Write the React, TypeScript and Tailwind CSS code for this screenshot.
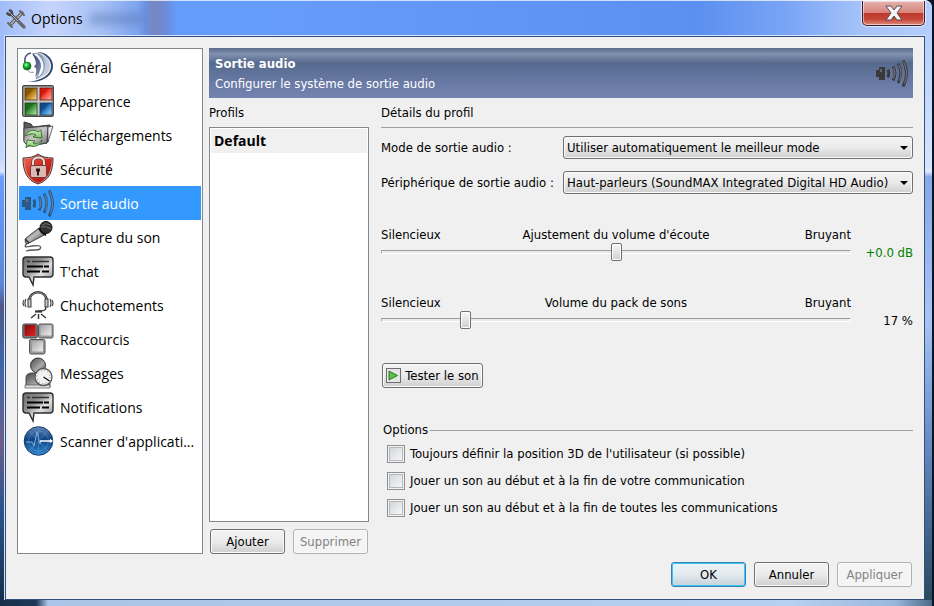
import { useState } from 'react';
import type { ButtonHTMLAttributes, ReactNode } from 'react';
import clsx from 'clsx';

function GeneralIcon() {
  return (
    <svg viewBox="0 0 32 32" className="size-8">
      <defs>
        <linearGradient id="gen-a" x1="0" y1="0" x2="1" y2="1">
          <stop offset="0" stopColor="#2c3c62" />
          <stop offset="1" stopColor="#8593b2" />
        </linearGradient>
        <linearGradient id="gen-c" x1="0" y1="0" x2="1" y2="1">
          <stop offset="0" stopColor="#7484a6" />
          <stop offset="1" stopColor="#dfe6f2" />
        </linearGradient>
        <radialGradient id="gen-b" cx="0.4" cy="0.35">
          <stop offset="0" stopColor="#a4ffb0" />
          <stop offset="0.5" stopColor="#25c93c" />
          <stop offset="1" stopColor="#067a18" />
        </radialGradient>
      </defs>
      <path d="M15 1c9 0 16 6 16 14 0 10-11 17-26 16C19 30 29 24 29 15 29 8 23 3 15 1Z" fill="#34466e" />
      <path d="M14 2c9 1 14 6 14 13s-6 11-14 13Z" fill="#c3cde0" />
      <path d="M16 2c6 3 9 7 9 13 0 5-3 9-9 12Z" fill="url(#gen-c)" />
      <path d="M14 2c5 3 8 8 8 14 0 5-3 9-8 12 3-5 4-9 3-14-1-4-3-8-6-11Z" fill="#f3f6fb" stroke="#596a8f" strokeWidth="0.7" />
      <path d="M10 2c6 4 9 8 9 13 0 4-3 8-6 11 1-4 2-7 1-9l-2-1 2-3c0-4-2-7-4-11Z" fill="url(#gen-a)" />
      <path d="M9 2C4 3 2 7 3 12" fill="none" stroke="#43527a" strokeWidth="1.600" />
      <path d="M5 18c1 3 4 4 7 3" fill="none" stroke="#8390ad" />
      <circle cx="5" cy="15" r="4" fill="url(#gen-b)" stroke="#0d6b1c" strokeWidth="0.6" />
    </svg>
  );
}

function AppearanceIcon() {
  return (
    <svg viewBox="0 0 32 32" className="size-8">
      <defs>
        <linearGradient id="app-o" x1="0" y1="0" x2="1" y2="1">
          <stop offset="0.35" stopColor="#8a5600" />
          <stop offset="0.5" stopColor="#b87c18" />
          <stop offset="1" stopColor="#ffe0a0" />
        </linearGradient>
        <linearGradient id="app-r" x1="0" y1="0" x2="1" y2="1">
          <stop offset="0.35" stopColor="#d81810" />
          <stop offset="0.5" stopColor="#f04a3c" />
          <stop offset="1" stopColor="#ffb8a8" />
        </linearGradient>
        <linearGradient id="app-g" x1="0" y1="0" x2="1" y2="1">
          <stop offset="0.35" stopColor="#1c6a1c" />
          <stop offset="0.5" stopColor="#3f973c" />
          <stop offset="1" stopColor="#c8f0b8" />
        </linearGradient>
        <linearGradient id="app-b" x1="0" y1="0" x2="1" y2="1">
          <stop offset="0.35" stopColor="#0d4a86" />
          <stop offset="0.5" stopColor="#2b7cc4" />
          <stop offset="1" stopColor="#a8d8ff" />
        </linearGradient>
      </defs>
      <rect x="0.7" y="0.7" width="30.6" height="30.6" rx="1.5" fill="#c4c4c4" stroke="#484848" strokeWidth="1.4" />
      <rect x="3" y="3" width="12" height="12" fill="url(#app-o)" stroke="#4c3a18" strokeWidth="0.8" />
      <rect x="18" y="3" width="12" height="12" fill="url(#app-r)" stroke="#6a1c18" strokeWidth="0.8" />
      <rect x="3" y="18" width="12" height="12" fill="url(#app-g)" stroke="#1c401c" strokeWidth="0.8" />
      <rect x="18" y="18" width="12" height="12" fill="url(#app-b)" stroke="#183858" strokeWidth="0.8" />
    </svg>
  );
}

function DownloadsIcon() {
  return (
    <svg viewBox="0 0 32 32" className="size-8">
      <defs>
        <linearGradient id="dl-f" x1="0" y1="0" x2="1" y2="1">
          <stop offset="0" stopColor="#777" />
          <stop offset="0.5" stopColor="#c9c9c9" />
          <stop offset="1" stopColor="#666" />
        </linearGradient>
        <linearGradient id="dl-g" x1="0" y1="0" x2="0" y2="1">
          <stop offset="0" stopColor="#d2efc0" />
          <stop offset="1" stopColor="#7cc05e" />
        </linearGradient>
      </defs>
      <path d="M2 3l7 2 2 3 17-2v4l-3 14L6 27 2 22Z" fill="#5b5b5b" stroke="#333" />
      <path d="M2 9l22-2 2 1-1 16L6 27l-4-4Z" fill="url(#dl-f)" stroke="#444" />
      <path d="M26 8l5-1-5 16Z" fill="#eee" stroke="#444" strokeWidth="0.8" />
      <path d="M3 17c2-6 10-7 13-4l3-2 1 8-9-1 3-2c-3-2-7-1-11 1Z" fill="url(#dl-g)" stroke="#2f6a26" strokeWidth="0.9" />
      <path d="M20 21c-1 6-10 8-13 5l-3 3 1-8 8 1-2 2c3 2 6 0 9-3Z" fill="url(#dl-g)" stroke="#2f6a26" strokeWidth="0.9" />
    </svg>
  );
}

function SecurityIcon() {
  return (
    <svg viewBox="0 0 32 32" className="size-8">
      <defs>
        <linearGradient id="sec" x1="0" y1="0" x2="1" y2="1">
          <stop offset="0" stopColor="#f06a58" />
          <stop offset="0.5" stopColor="#d42a1e" />
          <stop offset="1" stopColor="#a0150c" />
        </linearGradient>
      </defs>
      <path d="M16 1c4 3 9 4 15 4 0 12-3 22-15 26C4 27 1 17 1 5c6 0 11-1 15-4Z" fill="#c9a39f" stroke="#5a2a28" />
      <path d="M16 2c4 3 8 4 14 4-1 11-3 20-14 24C5 26 3 17 2 6c6 0 10-1 14-4Z" fill="url(#sec)" />
      <path d="M11 14V9c0-6 11-6 11 0v5" fill="none" stroke="#7c3833" strokeWidth="3.6" />
      <path d="M11 14V9c0-6 11-6 11 0v5" fill="none" stroke="#e8dddb" strokeWidth="2" />
      <rect x="8.500" y="12.500" width="16" height="12" rx="1.500" fill="#dcb9b4" stroke="#7c3833" />
      <path d="M14 15.500h4v3h-1v4h-2v-4h-1Z" fill="#2c1a19" />
    </svg>
  );
}

function SpeakerIcon({ className }: { className: string }) {
  return (
    <svg viewBox="0 0 32 32" className={className} fill="none" stroke="currentColor">
      <path d="M0 13h4v7H0Z" fill="currentColor" stroke="none" />
      <path d="M3 10h6v13H3Z" fill="currentColor" stroke="none" />
      <path d="M4 12h2v3H4Z" fill="#8b98a4" fillOpacity="0.5" stroke="none" />
      <path d="M12 12.500q1.500 3.500 0 8" strokeWidth="2.800" />
      <path d="M17 9.500q4 6.500 0 14" strokeWidth="2.800" />
      <path d="M22 6.500q5.500 9.500 0 19.500" strokeWidth="2.800" />
      <path d="M27 3.500q7 12.500 0 26" strokeWidth="2.800" />
      <path d="M17.500 10.500q3 5 0 11M22.500 7.500q4.500 8 1 16M27.500 4.500q5.500 11 1 22" stroke="#8b98a4" strokeWidth="0.7" />
    </svg>
  );
}

function MicrophoneIcon() {
  return (
    <svg viewBox="0 0 32 32" className="size-8">
      <defs>
        <linearGradient id="mic" x1="0" y1="0" x2="1" y2="1">
          <stop offset="0" stopColor="#444" />
          <stop offset="0.45" stopColor="#bdbdbd" />
          <stop offset="1" stopColor="#111" />
        </linearGradient>
      </defs>
      <path d="M5 22C1 27 4 26 10 25c7-1 10 0 8 3-2 2-9 0-14 2" fill="none" stroke="#555" strokeWidth="1.300" />
      <path d="M17 7l7 6L9 21l-4 2-2-2 1-4Z" fill="url(#mic)" stroke="#222" strokeWidth="0.8" />
      <circle cx="24" cy="6.500" r="6" fill="#333" stroke="#111" />
      <path d="M20 4q4-3 8 0M19 6q5-2 10 2" fill="none" stroke="#777" strokeWidth="0.9" />
      <path d="M17 7q2 5 7 7" fill="none" stroke="#111" strokeWidth="2" />
      <path d="M3 18l4 4" stroke="#222" strokeWidth="1.500" />
    </svg>
  );
}

function ChatIcon() {
  return (
    <svg viewBox="0 0 32 32" className="size-8">
      <defs>
        <linearGradient id="chat" x1="0" y1="0" x2="1" y2="1">
          <stop offset="0" stopColor="#6a6a6a" />
          <stop offset="0.35" stopColor="#8f8f8f" />
          <stop offset="0.6" stopColor="#e2e2e2" />
          <stop offset="1" stopColor="#777" />
        </linearGradient>
      </defs>
      <path d="M4 2h24q3 0 3 3v14q0 3-3 3H12l-1 8-4-8H4q-3 0-3-3V5q0-3 3-3Z" fill="url(#chat)" stroke="#2e2e2e" strokeWidth="1.400" />
      <path d="M5 6.500h3m2 0h17" stroke="#333" strokeWidth="1.300" />
      <path d="M5 11.500h16m1 0h5M5 16.500h13m2 0h7" stroke="#000" strokeWidth="2" />
    </svg>
  );
}

function WhisperIcon() {
  return (
    <svg viewBox="0 0 32 32" className="size-8" fill="none" stroke="#383838">
      <path d="M7 13C7 0 25 0 25 13" strokeWidth="2.400" />
      <path d="M7 13C7 0.500 25 0.500 25 13" stroke="#aaa" strokeWidth="0.7" />
      <rect x="6" y="10" width="3" height="8" fill="#ccc" />
      <rect x="23" y="10" width="3" height="8" fill="#ccc" />
      <path d="M4 10q-2 4 0 8M2 11q-2 3 0 6M28 10q2 4 0 8M30 11q2 3 0 6" strokeWidth="1.100" />
      <path d="M24 18c0 4-3 4-8 4" strokeWidth="1.300" />
      <path d="M13 22.500h7" strokeWidth="2.200" />
      <path d="M14 25l-5 4M16.500 25v5M19 25l5 4" strokeWidth="1.500" />
    </svg>
  );
}

function HotkeysIcon() {
  return (
    <svg viewBox="0 0 32 32" className="size-8">
      <defs>
        <linearGradient id="key" x1="0" y1="0" x2="1" y2="1">
          <stop offset="0" stopColor="#a4a4a4" />
          <stop offset="1" stopColor="#f0f0f0" />
        </linearGradient>
        <linearGradient id="key-r" x1="0" y1="0" x2="1" y2="1">
          <stop offset="0" stopColor="#7e0c0c" />
          <stop offset="1" stopColor="#e82020" />
        </linearGradient>
      </defs>
      <rect x="0.800" y="1" width="14.500" height="14" rx="1.500" fill="#777" stroke="#444" />
      <rect x="2.500" y="2" width="11" height="11" rx="1" fill="url(#key-r)" />
      <rect x="16.500" y="1" width="14.500" height="14" rx="1.500" fill="#999" stroke="#555" />
      <rect x="18.500" y="2" width="11" height="10.500" rx="1" fill="url(#key)" />
      <rect x="7.500" y="16.500" width="15.500" height="14.500" rx="1.500" fill="#999" stroke="#555" />
      <rect x="10" y="18" width="11" height="10.500" rx="1" fill="url(#key)" />
    </svg>
  );
}

function MessagesIcon() {
  return (
    <svg viewBox="0 0 32 32" className="size-8">
      <defs>
        <linearGradient id="msg" x1="0" y1="0" x2="1" y2="1">
          <stop offset="0" stopColor="#444" />
          <stop offset="0.6" stopColor="#aaa" />
          <stop offset="1" stopColor="#444" />
        </linearGradient>
      </defs>
      <path d="M4 30v-9q0-5 6-5h12q6 0 6 14Z" fill="url(#msg)" stroke="#444" />
      <path d="M3 28h25v3H3Z" fill="#ddd" stroke="#555" strokeWidth="0.700" />
      <circle cx="16" cy="8.500" r="7.500" fill="url(#msg)" stroke="#333" />
      <circle cx="21.500" cy="20" r="8.500" fill="#f2f2f2" stroke="#555" strokeWidth="1.300" />
      <circle cx="21.500" cy="20" r="6.500" fill="none" stroke="#888" strokeDasharray="1 2.400" />
      <path d="M21.500 20l6 4" stroke="#111" strokeWidth="1.300" />
    </svg>
  );
}

function ScannerIcon() {
  return (
    <svg viewBox="0 0 32 32" className="size-8">
      <defs>
        <linearGradient id="scan" x1="0" y1="0" x2="0" y2="1">
          <stop offset="0" stopColor="#5f86b8" />
          <stop offset="0.45" stopColor="#0f4284" />
          <stop offset="1" stopColor="#2f8ad0" />
        </linearGradient>
      </defs>
      <circle cx="16.500" cy="16" r="14.300" fill="url(#scan)" stroke="#1c3c66" />
      <path d="M16.500 2v28M7 6l19 20M26 6L7 26" stroke="#6fa4d8" strokeWidth="0.400" />
      <circle cx="16.500" cy="16" r="10" fill="none" stroke="#6fa4d8" strokeWidth="0.400" />
      <path d="M4 17h6l2 4 3-14 3 12 1-3" fill="none" stroke="#8cb6e2" strokeWidth="0.900" />
      <path d="M18 16h12m-2-1.500l2 1.500-2 1.500" fill="none" stroke="#fff" strokeWidth="1.300" />
    </svg>
  );
}

function ToolsIcon() {
  return (
    <svg viewBox="0 0 20 20" className="size-5" fill="none" strokeLinecap="round">
      <path d="M16 4L5 15" stroke="#555" strokeWidth="3.400" />
      <path d="M16 4L5 15" stroke="#b5b5b5" strokeWidth="1.600" />
      <path d="M1.500 4.500q3 3 4.500 0Q6 2 4 1.500M5 5l12 12" stroke="#4c4c4c" strokeWidth="2.600" />
      <path d="M5 5l12 12" stroke="#c5c5c5" />
      <path d="M14 2l4 4M2 14l4 4" stroke="#666" strokeWidth="2" />
      <path d="M13 13l5 5" stroke="#6b6b6b" strokeWidth="3.200" />
    </svg>
  );
}

const SECTIONS: { label: string; icon: ReactNode }[] = [
  { label: 'Général', icon: <GeneralIcon /> },
  { label: 'Apparence', icon: <AppearanceIcon /> },
  { label: 'Téléchargements', icon: <DownloadsIcon /> },
  { label: 'Sécurité', icon: <SecurityIcon /> },
  { label: 'Sortie audio', icon: <SpeakerIcon className="size-8 text-[#2b5885]" /> },
  { label: 'Capture du son', icon: <MicrophoneIcon /> },
  { label: "T'chat", icon: <ChatIcon /> },
  { label: 'Chuchotements', icon: <WhisperIcon /> },
  { label: 'Raccourcis', icon: <HotkeysIcon /> },
  { label: 'Messages', icon: <MessagesIcon /> },
  { label: 'Notifications', icon: <ChatIcon /> },
  { label: "Scanner d'applicati...", icon: <ScannerIcon /> },
];

const CHECKS = [
  "Toujours définir la position 3D de l'utilisateur (si possible)",
  'Jouer un son au début et à la fin de votre communication',
  'Jouer un son au début et à la fin de toutes les communications',
];

type ButtonProps = ButtonHTMLAttributes<HTMLButtonElement> & { primary?: boolean };

function Button({ className, primary, ...props }: ButtonProps) {
  return (
    <button
      type="button"
      className={clsx(
        'flex h-[25px] shrink-0 items-center justify-center rounded-[3px] border bg-linear-to-b from-0% via-50%',
        primary
          ? 'border-[#3c7fb1] from-[#eef3f6] via-[#e2eaee] to-[#c4d2da] shadow-[inset_0_0_0_1px_#38c8f4]'
          : 'border-[#707070] from-[#f3f3f3] via-[#ebebeb] to-[#cfcfcf] shadow-[inset_0_0_0_1px_#fafafa]',
        'disabled:border-[#adb2b5] disabled:bg-[#f4f4f4] disabled:bg-none disabled:text-[#838383]',
        className
      )}
      {...props}
    />
  );
}

function SelectRow({ id, label, value }: { id: string; label: string; value: string }) {
  return (
    <div className="flex h-[23px] items-center">
      <label htmlFor={id} className="w-[182px] shrink-0 whitespace-nowrap">
        {label}
      </label>
      <div className="relative h-full min-w-0 flex-1">
        <select
          id={id}
          className="size-full appearance-none rounded-[3px] border border-[#707070] bg-linear-to-b from-[#f3f3f3] from-0% via-[#ebebeb] via-50% to-[#cfcfcf] pr-5 pl-[3px] shadow-[inset_0_0_0_1px_#fafafa]"
        >
          <option>{value}</option>
        </select>
        <svg viewBox="0 0 8 4" className="pointer-events-none absolute top-[10px] right-[5px] h-1 w-2">
          <path d="M0 0h8L4 4Z" fill="#000" />
        </svg>
      </div>
    </div>
  );
}

type VolumeProps = {
  id: string;
  title: string;
  start: number;
  valueClass?: string;
  format: (value: number) => string;
};

function Volume({ id, title, start, valueClass, format }: VolumeProps) {
  const [value, setValue] = useState(start);

  return (
    <div className="grid grid-cols-[1fr_62px]">
      <div className="grid h-[17px] grid-cols-[1fr_auto_1fr] items-end">
        <span>Silencieux</span>
        <label htmlFor={id}>{title}</label>
        <span className="text-right">Bruyant</span>
      </div>
      <input
        id={id}
        type="range"
        min={0}
        max={100}
        value={value}
        onChange={(e) => setValue(Number(e.target.value))}
        className="col-start-1 h-[18px] w-full appearance-none bg-transparent [&::-webkit-slider-runnable-track]:h-1 [&::-webkit-slider-runnable-track]:border [&::-webkit-slider-runnable-track]:border-t-[#9c9c9c] [&::-webkit-slider-runnable-track]:border-r-white [&::-webkit-slider-runnable-track]:border-b-white [&::-webkit-slider-runnable-track]:border-l-[#b0b0b0] [&::-webkit-slider-runnable-track]:bg-[#e7eaea] [&::-webkit-slider-thumb]:-mt-2 [&::-webkit-slider-thumb]:h-[18px] [&::-webkit-slider-thumb]:w-[11px] [&::-webkit-slider-thumb]:appearance-none [&::-webkit-slider-thumb]:rounded-[2px] [&::-webkit-slider-thumb]:border [&::-webkit-slider-thumb]:border-[#707070] [&::-webkit-slider-thumb]:bg-linear-to-b [&::-webkit-slider-thumb]:from-[#f8f8f8] [&::-webkit-slider-thumb]:to-[#cfcfcf] [&::-webkit-slider-thumb]:shadow-[inset_0_0_0_1px_#fff]"
      />
      <output htmlFor={id} className={clsx('self-end text-right', valueClass)}>
        {format(value)}
      </output>
    </div>
  );
}

function Sidebar() {
  return (
    <nav className="w-[186px] shrink-0 border border-[#828790] bg-white p-px font-['Open_Sans','Noto_Sans',sans-serif] text-[14px]">
      {SECTIONS.map(({ label, icon }) => {
        const active = label === 'Sortie audio';
        return (
          <button
            key={label}
            type="button"
            aria-current={active ? 'page' : undefined}
            className={clsx(
              'flex h-[34px] w-full items-center gap-1.5 pl-[3px] text-left',
              active && 'bg-[#3399ff] text-white'
            )}
          >
            <span className="shrink-0">{icon}</span>
            <span className="pt-0.5 leading-6 whitespace-nowrap">{label}</span>
          </button>
        );
      })}
    </nav>
  );
}

function Profiles() {
  return (
    <section className="flex w-40 shrink-0 flex-col">
      <h2 className="flex h-[29px] items-center">Profils</h2>
      <div className="flex-1 border border-[#828790] bg-white p-px">
        <div className="flex h-6 items-center bg-[#f0f0f0] px-[3px] font-['Open_Sans','Noto_Sans',sans-serif] text-[14px] font-bold">
          Default
        </div>
      </div>
      <div className="mt-[7px] flex gap-2 pl-px">
        <Button className="w-[75px]">Ajouter</Button>
        <Button className="w-[75px]" disabled>
          Supprimer
        </Button>
      </div>
    </section>
  );
}

function Details() {
  return (
    <section className="min-w-0 flex-1">
      <h2 className="flex h-[29px] items-center">Détails du profil</h2>
      <div className="flex flex-col gap-3 border-t border-[#a0a0a0] pt-2">
        <SelectRow id="mode" label="Mode de sortie audio :" value="Utiliser automatiquement le meilleur mode" />
        <SelectRow
          id="device"
          label="Périphérique de sortie audio :"
          value="Haut-parleurs (SoundMAX Integrated Digital HD Audio)"
        />
      </div>
      <div className="mt-8 flex flex-col gap-[33px]">
        <Volume
          id="listen"
          title="Ajustement du volume d'écoute"
          start={50}
          valueClass="text-[#008000]"
          format={(v) => `${v < 50 ? '-' : '+'}${Math.abs((v - 50) * 0.8).toFixed(1)} dB`}
        />
        <Volume id="pack" title="Volume du pack de sons" start={17} format={(v) => `${v} %`} />
      </div>
      <Button className="mt-[34px] ml-px w-[101px] gap-1">
        <svg viewBox="0 0 15 15" className="size-[15px] shrink-0">
          <rect x="0.5" y="0.5" width="14" height="14" fill="#e6e6e6" stroke="#6e6e6e" />
          <path d="M3 3l8.500 4.500-8.500 4.500Z" fill="#5cbf46" stroke="#2c7a28" />
        </svg>
        <span className="whitespace-nowrap">Tester le son</span>
      </Button>
      <fieldset className="mt-8">
        <legend className="flex h-5 w-full items-center gap-0.5 pl-0.5">
          Options
          <span className="h-px flex-1 bg-[#a0a0a0]" />
        </legend>
        {CHECKS.map((text) => (
          <label key={text} className="flex h-[27px] items-center gap-[5px] pl-1.5">
            <input
              type="checkbox"
              className="size-[18px] shrink-0 appearance-none border border-[#8e8f8f] bg-linear-to-br from-[#cdd2d8] to-[#fbfbfb] shadow-[inset_0_0_0_1px_#f4f4f4,inset_0_0_0_2px_#b4b8bd] checked:from-[#3c6ea5]"
            />
            <span className="whitespace-nowrap">{text}</span>
          </label>
        ))}
      </fieldset>
    </section>
  );
}

function TitleBar() {
  return (
    <header className="flex h-9 items-start justify-between rounded-tr-lg border-t border-white/70 bg-[linear-gradient(90deg,#9fbdf8_0px,#c6d4fb_50px,#a9c3f6_100px,#7ea4ee_138px,#6d8fdf_146px,#7886bf_155px,#6b8bd8_166px,#659bfa_176px,#669cfb_260px,#5c90f0_700px,#7ba5f6_790px,#a5c3f9_860px,#b5cffc_934px)] pr-[7px] pl-1.5">
      <div className="flex h-full items-center gap-[5px]">
        <ToolsIcon />
        <h1 className="font-['Open_Sans','Noto_Sans',sans-serif] text-[14px]">Options</h1>
        <span className="h-3 w-14 rounded-full bg-[#4a6ba8]/40 blur-[4px]" />
      </div>
      <button
        type="button"
        aria-label="Fermer"
        className="flex h-[25px] w-[63px] items-center justify-center rounded-b-[5px] border border-t-0 border-[#3c1c2c] bg-[linear-gradient(#e5b3ae_0%,#d8857d_48%,#bd3a2b_52%,#c44536_75%,#e08a7c_100%)] shadow-[inset_0_0_0_1px_#ffffff88,0_0_0_1px_#ffffff99]"
      >
        <svg viewBox="0 0 18 16" className="h-4 w-[18px]">
          <path d="M1 1h5l3 4 3-4h5l-5 7 5 7h-5l-3-4-3 4H1l5-7Z" fill="#f6f6f6" stroke="#5b4a55" />
        </svg>
      </button>
    </header>
  );
}

export default function App() {
  return (
    <div className="min-h-screen bg-[#0b1426] pr-[2px]">
      <div className="flex min-h-screen flex-col rounded-tr-lg bg-[#b2cdec] font-['DejaVu_Sans_Condensed','DejaVu_Sans',sans-serif] text-[13px] leading-4 text-black">
        <TitleBar />
        <div className="grid flex-1 grid-cols-[5px_1fr_7px]">
          <div className="bg-[linear-gradient(#9cb9fa_0%,#c9d7fb_22%,#dce6fb_24%,#6d9df7_25%,#5a86dc_44%,#4f5885_48%,#3f66a8_58%,#6d6088_72%,#2d558c_84%,#16304a_100%)]" />
          <main className="flex flex-col border border-[#33507c] bg-[#f0f0f0] pt-[11px] pr-[11px] pb-3 pl-[11px] outline outline-[#d5e4f8]">
            <div className="flex flex-1 gap-1.5">
              <Sidebar />
              <div className="flex min-w-0 flex-1 flex-col">
                <div className="flex h-[50px] items-center justify-between bg-[linear-gradient(#596a8c_0%,#8090ae_12%,#566a8e_30%,#6b7ca8_75%,#7382ae_100%)] pr-[5px] pl-1.5 text-white">
                  <div className="pt-0.5">
                    <h2 className="leading-5 font-bold">Sortie audio</h2>
                    <p className="leading-5">Configurer le système de sortie audio</p>
                  </div>
                  <SpeakerIcon className="size-8 text-[#3a3a3a]" />
                </div>
                <div className="flex flex-1 gap-3">
                  <Profiles />
                  <Details />
                </div>
              </div>
            </div>
            <footer className="mt-2 flex justify-end gap-2 pr-px">
              <Button className="w-[75px]" primary>
                OK
              </Button>
              <Button className="w-[75px]">Annuler</Button>
              <Button className="w-[75px]" disabled>
                Appliquer
              </Button>
            </footer>
          </main>
          <div className="bg-[linear-gradient(#b5d0fb_0%,#d5e4fb_23%,#e0eafb_24%,#86a8e6_25%,#a8c4f4_50%,#6a92c8_70%,#3d5f85_90%,#2a4a5c_100%)]" />
        </div>
        <div className="h-1.5 bg-[linear-gradient(90deg,#16304a_0px,#1d3856_36px,#a9c4e6_48px,#b5d0f0_85%,#9ab8dc_96%,#4a6a88_100%)]" />
      </div>
    </div>
  );
}
